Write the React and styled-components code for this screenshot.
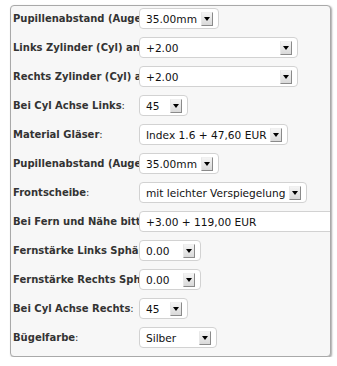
import React from 'react';
import styled, { createGlobalStyle } from 'styled-components';

const GlobalStyle = createGlobalStyle`
    body {
        margin: 0;
        background: #ffffff;
        font-family: "DejaVu Sans", Verdana, sans-serif;
    }
`;

const Panel = styled.div`
    box-sizing: border-box;
    margin: 5px 0 0 10px;
    width: 321px;
    border: 1px solid #a9a9a9;
    border-radius: 4px;
    background: #f7f7f7;
    box-shadow: 1px 1px 2px rgba(0, 0, 0, 0.35);
    padding: 2px 1px 0 2px;
    overflow: hidden;
`;

const Row = styled.div`
    display: flex;
    align-items: center;
    height: 21px;
    margin-bottom: 8px;
`;

const Label = styled.div`
    width: 126px;
    flex-shrink: 0;
    overflow: hidden;
    white-space: nowrap;
    font-size: 10px;
    font-weight: bold;
    color: #333;

    span {
        font-weight: normal;
    }
`;

const Select = styled.div`
    box-sizing: border-box;
    position: relative;
    flex-shrink: 0;
    display: flex;
    align-items: center;
    width: ${p => p.w}px;
    height: 21px;
    padding-left: 6px;
    border: 1px solid #d2d2d2;
    border-radius: 4px;
    background: #ffffff;
    font-size: 10.6px;
    color: #111;
    white-space: nowrap;
`;

const Arrow = styled.div`
    box-sizing: border-box;
    flex-shrink: 0;
    margin-left: auto;
    margin-right: 5px;
    width: 12px;
    height: 14px;
    background: linear-gradient(#f4f4f4, #d9d9d9);
    border-top: 1px solid #f0f0f0;
    border-left: 1px solid #e8e8e8;
    border-right: 1px solid #8a8a8a;
    border-bottom: 1px solid #8a8a8a;
    display: flex;
    align-items: center;
    justify-content: center;

    &::after {
        content: '';
        border-left: 3.5px solid transparent;
        border-right: 3.5px solid transparent;
        border-top: 4px solid #000;
    }
`;

const rows = [
    { label: 'Pupillenabstand (Augenabstand)', value: '35.00mm', w: 80 },
    { label: 'Links Zylinder (Cyl) angeben', value: '+2.00', w: 159 },
    { label: 'Rechts Zylinder (Cyl) angeben', value: '+2.00', w: 159 },
    { label: 'Bei Cyl Achse Links', colon: true, value: '45', w: 49 },
    { label: 'Material Gläser', colon: true, value: 'Index 1.6 + 47,60 EUR', w: 149 },
    { label: 'Pupillenabstand (Augenabstand)', value: '35.00mm', w: 80 },
    { label: 'Frontscheibe', colon: true, value: 'mit leichter Verspiegelung', w: 168 },
    { label: 'Bei Fern und Nähe bitte angeben', value: '+3.00 + 119,00 EUR', w: 230 },
    { label: 'Fernstärke Links Sphäre', value: '0.00', w: 62 },
    { label: 'Fernstärke Rechts Sphäre', value: '0.00', w: 62 },
    { label: 'Bei Cyl Achse Rechts', colon: true, value: '45', w: 49 },
    { label: 'Bügelfarbe', colon: true, value: 'Silber', w: 78 },
];

export default function App() {
    return (
        <>
            <GlobalStyle />
            <Panel>
                {rows.map((r, i) => (
                    <Row key={i}>
                        <Label>{r.label}{r.colon && <span>:</span>}</Label>
                        <Select w={r.w}>
                            {r.value}
                            <Arrow />
                        </Select>
                    </Row>
                ))}
            </Panel>
        </>
    );
}
